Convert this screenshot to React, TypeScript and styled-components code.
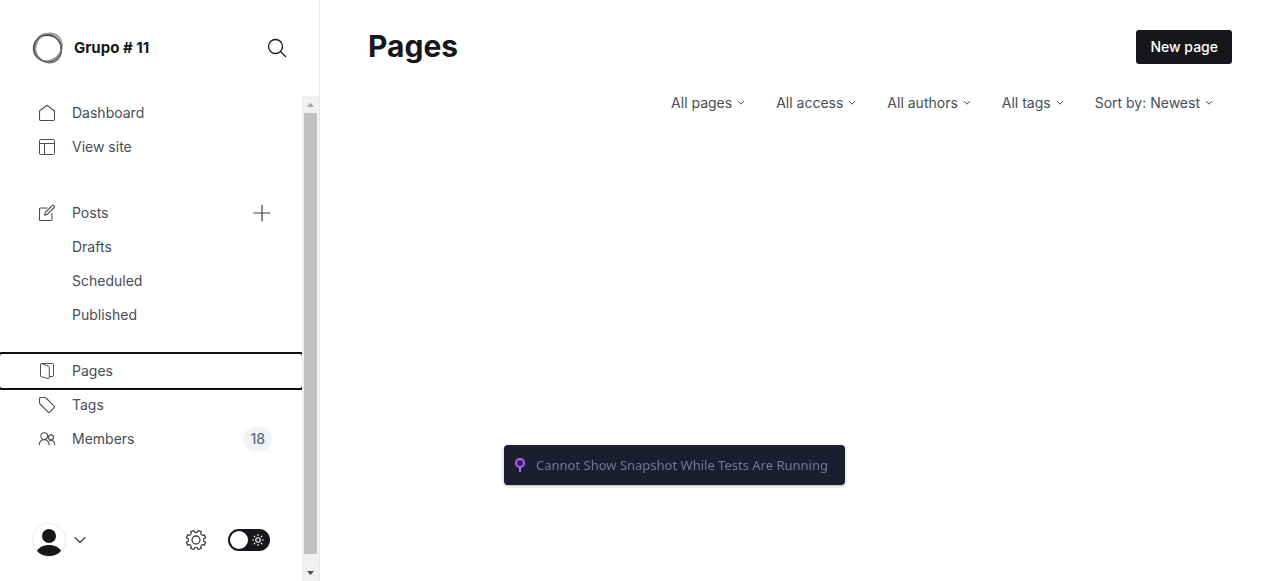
import React from "react";
import styled, { createGlobalStyle } from "styled-components";

const GlobalStyle = createGlobalStyle`
  *, *::before, *::after { box-sizing: border-box; }
  body {
    margin: 0;
    background: #fff;
    color: #15171a;
    font-family: Inter, "Liberation Sans", sans-serif;
    font-size: 14px;
    line-height: 20px;
  }
  button, select { font: inherit; color: inherit; }
  a { color: inherit; text-decoration: none; }
`;

const Layout = styled.div`
  display: flex;
  min-height: 100vh;
`;

const Sidebar = styled.aside`
  display: flex;
  flex-direction: column;
  flex: 0 0 320px;
  border-right: 1px solid #e6e9eb;
`;

const SiteHeader = styled.header`
  display: flex;
  align-items: center;
  gap: 10px;
  height: 96px;
  padding: 0 32px;
`;

const SiteName = styled.strong`
  flex: 1;
  font-size: 15px;
  font-weight: 700;
`;

const IconButton = styled.button`
  display: flex;
  align-items: center;
  padding: 0;
  border: 0;
  background: none;
  color: #394047;
  cursor: pointer;
`;

const SearchButton = styled(IconButton)`
  color: #15171a;
`;

const SidebarBody = styled.div`
  display: flex;
  flex: 1;
`;

const MenuColumn = styled.div`
  display: flex;
  flex: 1;
  flex-direction: column;
  overflow: hidden;
`;

const Nav = styled.nav`
  flex: 1;
`;

const NavList = styled.ul<{ $gap: number }>`
  margin: 0 0 ${(p) => p.$gap}px;
  padding: 0;
  list-style: none;
`;

const NavItem = styled.li`
  display: flex;
  align-items: center;
`;

const NavLink = styled.a<{ $focused?: boolean }>`
  display: flex;
  flex: 1;
  align-items: center;
  gap: 16px;
  height: 34px;
  padding: 0 30px 0 38px;
  border-radius: 2px;
  color: #474e55;
  outline: ${(p) => (p.$focused ? "2px solid #101010" : "none")};
`;

const SubLink = styled(NavLink)`
  padding-left: 72px;
`;

const NavLabel = styled.span`
  flex: 1;
`;

const Badge = styled.span`
  padding: 2px 7px;
  border-radius: 12px;
  background: #f1f3f4;
  color: #626d79;
  font-weight: 500;
`;

const AddButton = styled(IconButton)`
  margin-right: 31px;
`;

const SidebarFooter = styled.footer`
  display: flex;
  align-items: center;
  gap: 21px;
  padding: 24px 32px;
`;

const UserButton = styled(IconButton)`
  gap: 8px;
  margin-right: auto;
`;

const Switch = styled.label`
  display: flex;
  align-items: center;
  justify-content: space-between;
  width: 42px;
  height: 22px;
  padding: 0 6px 0 2px;
  border-radius: 11px;
  background: #15171a;
  cursor: pointer;

  input {
    width: 18px;
    height: 18px;
    margin: 0;
    border-radius: 50%;
    background: #fff;
    appearance: none;
  }
`;

const ScrollBar = styled.div`
  display: flex;
  flex-direction: column;
  align-items: center;
  width: 17px;
  background: #f1f1f1;
`;

const ScrollArrow = styled.span`
  display: flex;
  align-items: center;
  justify-content: center;
  height: 17px;
`;

const ScrollThumb = styled.span`
  flex: 1;
  width: 13px;
  margin-bottom: 10px;
  background: #c1c1c1;
`;

const Main = styled.main`
  flex: 1;
  padding: 24px 48px;
`;

const PageHeader = styled.div`
  display: flex;
  align-items: center;
  justify-content: space-between;
  margin-bottom: 24px;
`;

const PageTitle = styled.h1`
  margin: 0;
  font-size: 30px;
  font-weight: 700;
  line-height: 45px;
`;

const PrimaryButton = styled.button`
  height: 34px;
  padding: 0 14px;
  border: 0;
  border-radius: 3px;
  background: #15171a;
  color: #fff;
  font-weight: 500;
  cursor: pointer;
`;

const Filters = styled.form`
  display: flex;
  justify-content: flex-end;
  gap: 31px;
  padding-right: 19px;
`;

const FilterField = styled.label`
  display: flex;
  align-items: center;
  gap: 5px;
  color: #474e55;
`;

const FilterSelect = styled.select`
  padding: 0;
  border: 0;
  background: none;
  appearance: none;
  field-sizing: content;
  cursor: pointer;
`;

const Notice = styled.div`
  position: fixed;
  bottom: 96px;
  left: calc(50% - 136px);
  display: flex;
  align-items: center;
  gap: 10px;
  height: 40px;
  padding: 0 17px 0 10px;
  border-radius: 4px;
  background: #1b1e2e;
  box-shadow: 0 1px 3px rgba(0, 0, 0, 0.3);
  color: #747994;
  font-family: "Noto Sans", "Open Sans", sans-serif;
  font-size: 13px;
  white-space: nowrap;
`;

type IconProps = { size?: number; width?: number; children: React.ReactNode };

const LineIcon = ({ size = 18, width = 1, children }: IconProps) => (
  <svg
    width={size}
    height={size}
    viewBox={`0 0 ${size} ${size}`}
    fill="none"
    stroke="currentColor"
    strokeWidth={width}
    strokeLinecap="round"
    strokeLinejoin="round"
    aria-hidden="true"
  >
    {children}
  </svg>
);

const SiteLogo = () => (
  <svg width="32" height="32" viewBox="0 0 32 32" fill="none" aria-hidden="true">
    <ellipse cx="15.4" cy="16.4" rx="13.8" ry="13.2" stroke="#444" strokeWidth="1.5" />
    <ellipse cx="16.8" cy="15.6" rx="14.4" ry="12.8" stroke="#8a8a8a" strokeWidth="1.2" transform="rotate(-48 16 16)" />
    <ellipse cx="16.4" cy="16" rx="14.8" ry="12.8" stroke="#666" strokeWidth="1.2" transform="rotate(62 16 16)" />
    <ellipse cx="16.8" cy="16.4" rx="14.6" ry="12.8" stroke="#9a9a9a" strokeWidth="1.6" transform="rotate(-60 16 16)" />
    <ellipse cx="15.8" cy="16.4" rx="13.8" ry="13.8" stroke="#555" />
  </svg>
);

const icons = {
  search: (
    <LineIcon size={20} width={1.3}>
      <circle cx="8.5" cy="8.5" r="7" />
      <path d="M13.6 13.6 18.5 18.5" />
    </LineIcon>
  ),
  home: (
    <LineIcon width={1.1}>
      <path d="M1.5 7 9 1.2 16.5 7v8.3a1.2 1.2 0 0 1-1.2 1.2H2.7a1.2 1.2 0 0 1-1.2-1.2Z" />
    </LineIcon>
  ),
  site: (
    <LineIcon>
      <rect x="1.5" y="1.5" width="15" height="15" rx="1" />
      <path d="M1.5 5.5h15M6.5 5.5v11" />
    </LineIcon>
  ),
  posts: (
    <LineIcon width={1.1}>
      <path d="M9 4H2.5a1 1 0 0 0-1 1v10.5a1 1 0 0 0 1 1H13a1 1 0 0 0 1-1V9.5" />
      <path d="m7.3 8.5 6.9-6.9a1.3 1.3 0 0 1 1.9 1.9l-6.9 6.9-2.6.7Z" />
    </LineIcon>
  ),
  pages: (
    <LineIcon>
      <path d="M2.5 2.5v11.2c0 .6.3.9.8 1l6.9 1.9c.7.2 1.1-.1 1.1-.8V5.3c0-.6-.3-.9-.8-1.1L3.7 1.7c-.7-.2-1.2.1-1.2.8Z" />
      <path d="M3.5 1.5h11a1 1 0 0 1 1 1v11a1 1 0 0 1-1 1h-3" />
    </LineIcon>
  ),
  tags: (
    <LineIcon width={1.1}>
      <path d="M1.5 2.7c0-.8.4-1.2 1.2-1.2h4.1c.5 0 .9.2 1.2.5l8.2 8.2c.4.4.4 1 0 1.5L11.7 16.2c-.5.4-1.1.4-1.5 0L2 8a1.7 1.7 0 0 1-.5-1.2Z" />
    </LineIcon>
  ),
  members: (
    <LineIcon width={1.1}>
      <circle cx="6.2" cy="6.1" r="3.4" />
      <circle cx="13" cy="7.4" r="2.5" />
      <path d="M1.2 15c.2-3 2.2-5.3 5-5.3s4.800 2.300 5 5.300M11.500 10.700c2.700-1.300 5.200.7 5.300 4" />
    </LineIcon>
  ),
  plus: (
    <LineIcon width={1.2}>
      <path d="M9 1v16M1 9h16" />
    </LineIcon>
  ),
  gear: (
    <LineIcon size={22} width={1.3}>
      <circle cx="11" cy="11" r="4" />
      <path d="M9.1 2.2a2 2 0 0 0 3.8 0l.3-.7 3 1.2-.3.8a2 2 0 0 0 2.6 2.6l.8-.3 1.2 3-.7.3a2 2 0 0 0 0 3.8l.7.3-1.2 3-.8-.3a2 2 0 0 0-2.6 2.6l.3.8-3 1.2-.3-.7a2 2 0 0 0-3.8 0l-.3.7-3-1.2.3-.8a2 2 0 0 0-2.6-2.6l-.8.3-1.2-3 .7-.3a2 2 0 0 0 0-3.8l-.7-.3 1.2-3 .8.3a2 2 0 0 0 2.6-2.6l-.3-.8 3-1.2Z" />
    </LineIcon>
  ),
  sun: (
    <LineIcon size={12} width={1.1}>
      <g stroke="#fff">
        <circle cx="6" cy="6" r="2.2" />
        <path d="M6 .6v1M6 10.400v1M.6 6h1M10.400 6h1M2.100 2.100l.7.7M9.200 9.200l.7.7M2.100 9.900l.7-.7M9.200 2.800l.7-.7" />
      </g>
    </LineIcon>
  ),
  chevron: (
    <LineIcon size={12} width={1.1}>
      <path d="m1 3.500 5 5 5-5" />
    </LineIcon>
  ),
  smallChevron: (
    <LineIcon size={8}>
      <path d="m1.500 2.500 2.500 2.700 2.500-2.700" />
    </LineIcon>
  ),
};

const Avatar = () => (
  <svg width="34" height="34" viewBox="0 0 34 34" aria-hidden="true">
    <circle cx="17" cy="17" r="16.5" fill="#fff" stroke="#e9ebed" />
    <circle cx="17" cy="13" r="7" fill="#15171a" />
    <path d="M5 28c2-4 7-6 12-6s10 2 12 6c-3 3.300-7 5-12 5S8 31.300 5 28Z" fill="#15171a" />
  </svg>
);

const filters = [
  { label: "Page type", options: ["All pages", "Draft pages", "Published pages"] },
  { label: "Access", options: ["All access", "Public", "Members-only"] },
  { label: "Author", options: ["All authors"] },
  { label: "Tag", options: ["All tags"] },
  { label: "Order", options: ["Sort by: Newest", "Sort by: Oldest"] },
];

export default function App() {
  return (
    <>
      <GlobalStyle />
      <Layout>
        <Sidebar>
          <SiteHeader>
            <SiteLogo />
            <SiteName>Grupo # 11</SiteName>
            <SearchButton type="button" aria-label="Search">{icons.search}</SearchButton>
          </SiteHeader>
          <SidebarBody>
            <MenuColumn>
              <Nav>
                <NavList $gap={32}>
                  <NavItem><NavLink href="#dashboard">{icons.home}<NavLabel>Dashboard</NavLabel></NavLink></NavItem>
                  <NavItem><NavLink href="#site">{icons.site}<NavLabel>View site</NavLabel></NavLink></NavItem>
                </NavList>
                <NavList $gap={22}>
                  <NavItem>
                    <NavLink href="#posts">{icons.posts}<NavLabel>Posts</NavLabel></NavLink>
                    <AddButton type="button" aria-label="New post">{icons.plus}</AddButton>
                  </NavItem>
                  <NavItem><SubLink href="#drafts">Drafts</SubLink></NavItem>
                  <NavItem><SubLink href="#scheduled">Scheduled</SubLink></NavItem>
                  <NavItem><SubLink href="#published">Published</SubLink></NavItem>
                </NavList>
                <NavList $gap={32}>
                  <NavItem><NavLink href="#pages" $focused>{icons.pages}<NavLabel>Pages</NavLabel></NavLink></NavItem>
                  <NavItem><NavLink href="#tags">{icons.tags}<NavLabel>Tags</NavLabel></NavLink></NavItem>
                  <NavItem>
                    <NavLink href="#members">{icons.members}<NavLabel>Members</NavLabel><Badge>18</Badge></NavLink>
                  </NavItem>
                </NavList>
              </Nav>
              <SidebarFooter>
                <UserButton type="button" aria-label="Account menu"><Avatar />{icons.chevron}</UserButton>
                <IconButton type="button" aria-label="Settings">{icons.gear}</IconButton>
                <Switch>
                  <input type="checkbox" role="switch" aria-label="Dark mode" />
                  {icons.sun}
                </Switch>
              </SidebarFooter>
            </MenuColumn>
            <ScrollBar aria-hidden="true">
              <ScrollArrow><svg width="7" height="4"><path d="M0 4 3.5 0 7 4Z" fill="#a3a3a3" /></svg></ScrollArrow>
              <ScrollThumb />
              <ScrollArrow><svg width="7" height="4"><path d="M0 0 3.5 4 7 0Z" fill="#505050" /></svg></ScrollArrow>
            </ScrollBar>
          </SidebarBody>
        </Sidebar>
        <Main>
          <PageHeader>
            <PageTitle>Pages</PageTitle>
            <PrimaryButton type="button">New page</PrimaryButton>
          </PageHeader>
          <Filters>
            {filters.map((filter) => (
              <FilterField key={filter.label}>
                <FilterSelect aria-label={filter.label}>
                  {filter.options.map((option) => <option key={option}>{option}</option>)}
                </FilterSelect>
                {icons.smallChevron}
              </FilterField>
            ))}
          </Filters>
        </Main>
      </Layout>
      <Notice role="status">
        <svg width="12" height="16" viewBox="0 0 12 16" fill="none" aria-hidden="true">
          <path d="M6 9v6" stroke="#a56eea" strokeWidth="2" />
          <circle cx="6" cy="6" r="4" fill="#42116e" stroke="#a56eea" strokeWidth="2" />
        </svg>
        Cannot Show Snapshot While Tests Are Running
      </Notice>
    </>
  );
}
